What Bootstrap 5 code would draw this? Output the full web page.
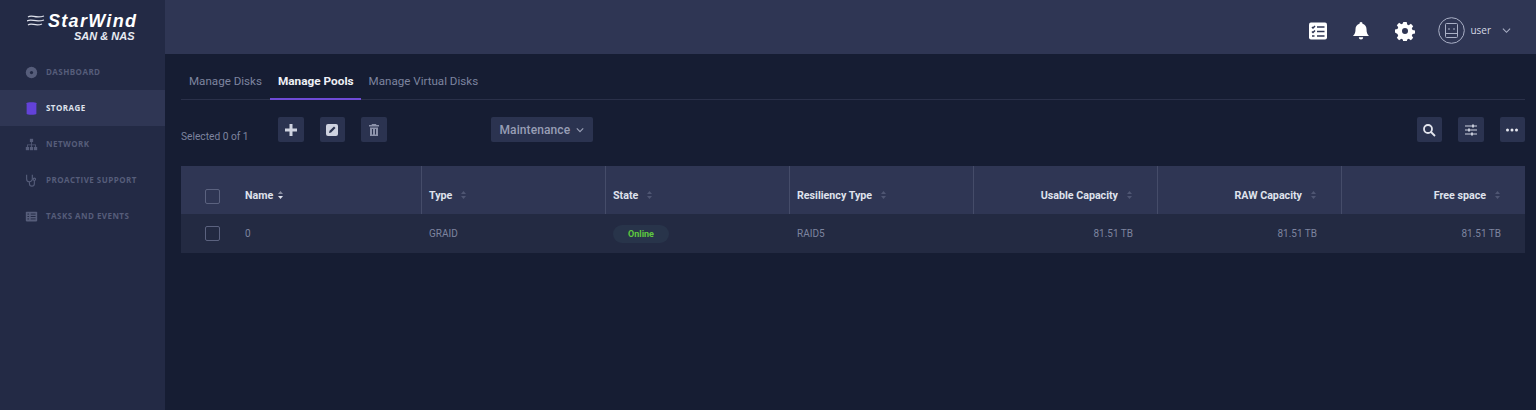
<!DOCTYPE html>
<html lang="en">
<head>
  <meta charset="UTF-8" />
  <title>StarWind SAN &amp; NAS - Storage</title>
  <link href="https://cdn.jsdelivr.net/npm/bootstrap@5.3.0/dist/css/bootstrap.min.css" rel="stylesheet"/>
  <script src="https://cdn.jsdelivr.net/npm/bootstrap@5.3.0/dist/js/bootstrap.bundle.min.js"></script>
  <style>
    html, body { height: 410px; overflow: hidden; }
    body { background: #161d33; font-family: Roboto, "Liberation Sans", sans-serif; color: #8d93ab; }
    .shell { height: 410px; }
    .side-panel { width: 165px; flex: none; background: #232a45; }
    .brand-box { height: 54px; padding: 13px 0 0 27px; color: #fff; }
    .brand-row { gap: 3px; }
    .brand-name { font: italic 700 18px/16px "Liberation Sans", sans-serif; letter-spacing: 1.3px; }
    .brand-sub { font: italic 700 11px/11px "Liberation Sans", sans-serif; margin-left: 47px; margin-top: 2px; color: #e8eaf2; }
    .side-item { height: 36px; padding-left: 25px; gap: 8px; font: 700 8px/1 "Open Sans", sans-serif; letter-spacing: .45px; color: #565d7a; text-transform: uppercase; }
    .side-item svg { width: 13px; height: 13px; flex: none; }
    .side-item.is-on { background: #2f3654; color: #dfe2ec; }
    .top-strip { height: 54px; background: #2f3654; padding: 7px 25px 0 0; }
    .top-ico { width: 20px; height: 20px; color: #fff; }
    .ico-list { margin-right: 23px; }
    .ico-bell { margin-right: 24px; }
    .user-ava { width: 27px; height: 27px; margin-left: 23px; color: #aab0c6; }
    .user-name { font-size: 10px; color: #d5d8e4; margin-left: 5px; font-family: "Open Sans", sans-serif; }
    .user-caret { width: 9px; height: 9px; color: #aab0c6; margin-left: 11px; }
    .work-area { padding: 16px 11px 0 16px; }
    .tab-line { height: 30px; border-bottom: 1px solid #2a3049; width: 1344px; padding-left: 8px; gap: 16px; font-size: 11.6px; color: #7d849f; }
    .tab-item { height: 30px; line-height: 23px; }
    .tab-item.is-on { color: #eef0f6; font-size: 11.8px; font-weight: 700; padding: 0 7px 0 8px; margin: 0 -8px; border-bottom: 2px solid #6f4bd8; }
    .tool-line { height: 66px; padding-top: 17px; width: 1344px; }
    .sel-note { width: 97px; font-size: 10.2px; color: #7d849f; padding-top: 13px; line-height: 14px; }
    .tool-group { gap: 16px; }
    .tool-btn { width: 25.5px; height: 25px; padding: 0; background: #2b3350; border: 0; border-radius: 2px; color: #cfd3e0; }
    .tool-btn svg { width: 14px; height: 14px; }
    .tool-btn.is-faint { color: #8d93ab; }
    .maint-btn { width: 102px; height: 25px; padding: 0 0 0 8.5px; margin-left: 104.5px; background: #2b3350; border: 0; border-radius: 2px; color: #989eb5; font-size: 12px; font-weight: 500; letter-spacing: .1px; }
    .maint-btn svg { width: 8px; height: 8px; margin-left: 6px; }
    .grid-table { width: 1344px; table-layout: fixed; margin: 0; border-collapse: collapse; }
    .grid-table > :not(caption) > * > * { background: transparent; border: 0; color: inherit; box-shadow: none; padding: 0 8px; vertical-align: middle; }
    .grid-table thead tr { background: #2f3654; height: 48px; }
    .grid-table tbody tr { background: #232a42; height: 39px; }
    .grid-table thead th { font-size: 10.7px; font-weight: 700; color: #dfe2ec; padding-top: 12px; position: relative; }
    .grid-table tbody td { font-size: 10px; color: #7d849f; }
    .grid-table thead th.cut::before { content: ""; position: absolute; left: 0; top: 0; bottom: 0; width: 1px; background: #454c69; }
    .col-chk { width: 56px; }
    .col-data { width: 184px; }
    .chk-box { display: block; width: 15px; height: 15px; margin-left: 24px; border: 1.5px solid #5b627f; border-radius: 2px; }
    th .chk-box { margin-top: 12px; }
    .sort-mark { display: inline-block; width: 7px; height: 10px; margin-left: 8px; vertical-align: -1px; color: #4f5673; }
    .sort-mark.is-set { color: #dfe2ec; margin-left: 4px; }
    .end-cell { text-align: right; }
    .grid-table td.end-cell, .grid-table th.end-cell { padding-right: 24px; }
    .pill-on { display: inline-block; width: 56px; height: 18px; border-radius: 9px; background: #28344a; color: #5fc93f; font-size: 9px; font-weight: 700; line-height: 18px; text-align: center; }
  </style>
</head>
<body>
  <div class="shell d-flex">
    <aside class="side-panel">
      <div class="brand-box">
        <div class="d-flex align-items-center brand-row">
          <svg width="18" height="15" viewBox="0 0 18 15" fill="none" stroke="#dfe2ec" stroke-width="1.2"><path d="M1 3c4-3 7 2 16-1M0 7c5-3 8 2 17-1M1 11c4-3 7 2 14-1"/></svg>
          <span class="brand-name">StarWind</span>
        </div>
        <div class="brand-sub">SAN &amp; NAS</div>
      </div>
      <nav>
        <div class="side-item d-flex align-items-center">
          <svg viewBox="0 0 16 16"><circle cx="8" cy="8" r="7" fill="#565d7a"/><circle cx="8" cy="8" r="2" fill="#232a45"/></svg>Dashboard
        </div>
        <div class="side-item is-on d-flex align-items-center">
          <svg viewBox="0 0 16 16"><path d="M2 1.500C2 -.2 14 -.2 14 1.500v13c0 1.700-12 1.700-12 0z" fill="#6342d8"/></svg>Storage
        </div>
        <div class="side-item d-flex align-items-center">
          <svg viewBox="0 0 16 16" fill="#565d7a"><rect x="6" y="1" width="4" height="4"/><rect x="1" y="11" width="4" height="4"/><rect x="6" y="11" width="4" height="4"/><rect x="11" y="11" width="4" height="4"/><path d="M7.500 5h1v3h5v3h-1V9h-4v2h-1V9h-4v2h-1V8h5z"/></svg>Network
        </div>
        <div class="side-item d-flex align-items-center">
          <svg viewBox="0 0 16 16" fill="none" stroke="#565d7a" stroke-width="1.4"><path d="M2 1v5a3.500 3.500 0 0 0 7 0V1M5.500 10v2a3 3 0 0 0 6 0V8"/><circle cx="11.500" cy="6.500" r="1.500"/></svg>Proactive support
        </div>
        <div class="side-item d-flex align-items-center">
          <svg viewBox="0 0 16 16"><rect x="1" y="2" width="14" height="12" rx="1" fill="#565d7a"/><path d="M3 5h2M7 5h6M3 8h2M7 8h6M3 11h2M7 11h6" stroke="#232a45" stroke-width="1.2"/></svg>Tasks and events
        </div>
      </nav>
    </aside>

    <div class="flex-grow-1">
      <header class="top-strip d-flex align-items-center justify-content-end">
        <svg class="top-ico ico-list" viewBox="0 0 20 20"><rect x="1" y="1.500" width="18" height="17" rx="2" fill="currentColor"/><path d="M4 6l1 1 2-2M4 10.500l1 1 2-2M4 15h2.500M9 6h7.500M9 10.500h7.500M9 15h7.500" stroke="#2f3654" stroke-width="1.5" fill="none"/></svg>
        <svg class="top-ico ico-bell" viewBox="0 0 20 20" fill="currentColor"><path d="M10 1a1.500 1.500 0 0 1 1.500 1.700C14 3.400 15.500 5.500 15.500 8c0 4 .9 5.300 2.500 7H2c1.600-1.700 2.500-3 2.500-7 0-2.500 1.500-4.600 4-5.300A1.500 1.500 0 0 1 10 1z"/><path d="M7.800 16.200h4.400a2.200 2.200 0 0 1-4.400 0z"/></svg>
        <svg class="top-ico" viewBox="0 0 20 20" fill="currentColor"><path fill-rule="evenodd" d="M8.300 1h3.400l.5 2.500 1.500.7 2.200-1.400 2.300 2.400-1.400 2.100.7 1.600 2.500.5v3.200l-2.500.5-.7 1.600 1.400 2.100-2.300 2.400-2.200-1.400-1.500.7-.5 2.500H8.300l-.5-2.500-1.500-.7-2.200 1.400-2.300-2.400 1.400-2.100-.7-1.600L0 11.600V8.400l2.500-.5.700-1.600-1.400-2.100 2.300-2.400 2.200 1.400 1.500-.7zM10 7a3 3 0 1 0 0 6 3 3 0 0 0 0-6z"/></svg>
        <svg class="user-ava" viewBox="0 0 27 27" fill="none" stroke="currentColor"><circle cx="13.500" cy="13.500" r="12.800"/><rect x="7.500" y="6.500" width="12" height="14" rx="1"/><path d="M7.500 16.500h12M11 11v2M16 11v2"/></svg>
        <span class="user-name">user</span>
        <svg class="user-caret" viewBox="0 0 10 10" fill="none" stroke="currentColor" stroke-width="1.2"><path d="M1 3l4 4 4-4"/></svg>
      </header>

      <main class="work-area">
        <div class="tab-line d-flex">
          <div class="tab-item">Manage Disks</div>
          <div class="tab-item is-on">Manage Pools</div>
          <div class="tab-item">Manage Virtual Disks</div>
        </div>

        <div class="tool-line d-flex align-items-start">
          <div class="sel-note">Selected 0 of 1</div>
          <div class="d-flex tool-group">
            <button class="tool-btn d-flex align-items-center justify-content-center" type="button"><svg viewBox="0 0 14 14" fill="currentColor"><path d="M5.500 1h3v4.500H13v3H8.500V13h-3V8.500H1v-3h4.500z"/></svg></button>
            <button class="tool-btn d-flex align-items-center justify-content-center" type="button"><svg viewBox="0 0 14 14"><rect x="1" y="1" width="12" height="12" rx="2" fill="currentColor"/><path d="M4 10l.6-2.200L9 3.500 10.500 5 6.100 9.400z" fill="#2b3350"/></svg></button>
            <button class="tool-btn is-faint d-flex align-items-center justify-content-center" type="button"><svg viewBox="0 0 14 14" fill="currentColor"><path d="M5 1h4l.5 1H12v1.500H2V2h2.500zM3 4.500h8V13H3zM5 6v5.500h1V6zm3 0v5.500h1V6z"/></svg></button>
          </div>
          <button class="maint-btn d-flex align-items-center" type="button">Maintenance<svg viewBox="0 0 10 10" fill="none" stroke="currentColor" stroke-width="1.5"><path d="M1 3l4 4 4-4"/></svg></button>
          <div class="d-flex ms-auto tool-group">
            <button class="tool-btn d-flex align-items-center justify-content-center" type="button"><svg viewBox="0 0 14 14" fill="none" stroke="#e4e6ee" stroke-width="1.8"><circle cx="6" cy="6" r="4"/><path d="M9 9l4 4"/></svg></button>
            <button class="tool-btn d-flex align-items-center justify-content-center" type="button"><svg viewBox="0 0 14 14" fill="none" stroke="currentColor" stroke-width="1.2"><path d="M1 3h12M1 7h12M1 11h12"/><path d="M9 1.500v3M5 5.500v3M8 9.500v3" stroke-width="1.8"/></svg></button>
            <button class="tool-btn d-flex align-items-center justify-content-center" type="button"><svg viewBox="0 0 14 14" fill="#e4e6ee"><circle cx="2.500" cy="7" r="1.500"/><circle cx="7" cy="7" r="1.500"/><circle cx="11.500" cy="7" r="1.500"/></svg></button>
          </div>
        </div>

        <table class="table grid-table">
          <colgroup>
            <col class="col-chk"/><col class="col-data"/><col class="col-data"/><col class="col-data"/><col class="col-data"/><col class="col-data"/><col class="col-data"/><col class="col-data"/>
          </colgroup>
          <thead>
            <tr>
              <th class="p-0"><span class="chk-box"></span></th>
              <th>Name<svg class="sort-mark is-set" viewBox="0 0 7 10" fill="currentColor"><path d="M3.500 1L6 4H1z" opacity=".5"/><path d="M3.500 9L6 6H1z"/></svg></th>
              <th class="cut">Type<svg class="sort-mark" viewBox="0 0 7 10" fill="currentColor"><path d="M3.500 1L6 4H1zM3.500 9L6 6H1z"/></svg></th>
              <th class="cut">State<svg class="sort-mark" viewBox="0 0 7 10" fill="currentColor"><path d="M3.500 1L6 4H1zM3.500 9L6 6H1z"/></svg></th>
              <th class="cut">Resiliency Type<svg class="sort-mark" viewBox="0 0 7 10" fill="currentColor"><path d="M3.500 1L6 4H1zM3.500 9L6 6H1z"/></svg></th>
              <th class="cut end-cell">Usable Capacity<svg class="sort-mark" viewBox="0 0 7 10" fill="currentColor"><path d="M3.500 1L6 4H1zM3.500 9L6 6H1z"/></svg></th>
              <th class="cut end-cell">RAW Capacity<svg class="sort-mark" viewBox="0 0 7 10" fill="currentColor"><path d="M3.500 1L6 4H1zM3.500 9L6 6H1z"/></svg></th>
              <th class="cut end-cell">Free space<svg class="sort-mark" viewBox="0 0 7 10" fill="currentColor"><path d="M3.500 1L6 4H1zM3.500 9L6 6H1z"/></svg></th>
            </tr>
          </thead>
          <tbody>
            <tr>
              <td class="p-0"><span class="chk-box"></span></td>
              <td>0</td>
              <td>GRAID</td>
              <td><span class="pill-on">Online</span></td>
              <td>RAID5</td>
              <td class="end-cell">81.51 TB</td>
              <td class="end-cell">81.51 TB</td>
              <td class="end-cell">81.51 TB</td>
            </tr>
          </tbody>
        </table>
      </main>
    </div>
  </div>
</body>
</html>
